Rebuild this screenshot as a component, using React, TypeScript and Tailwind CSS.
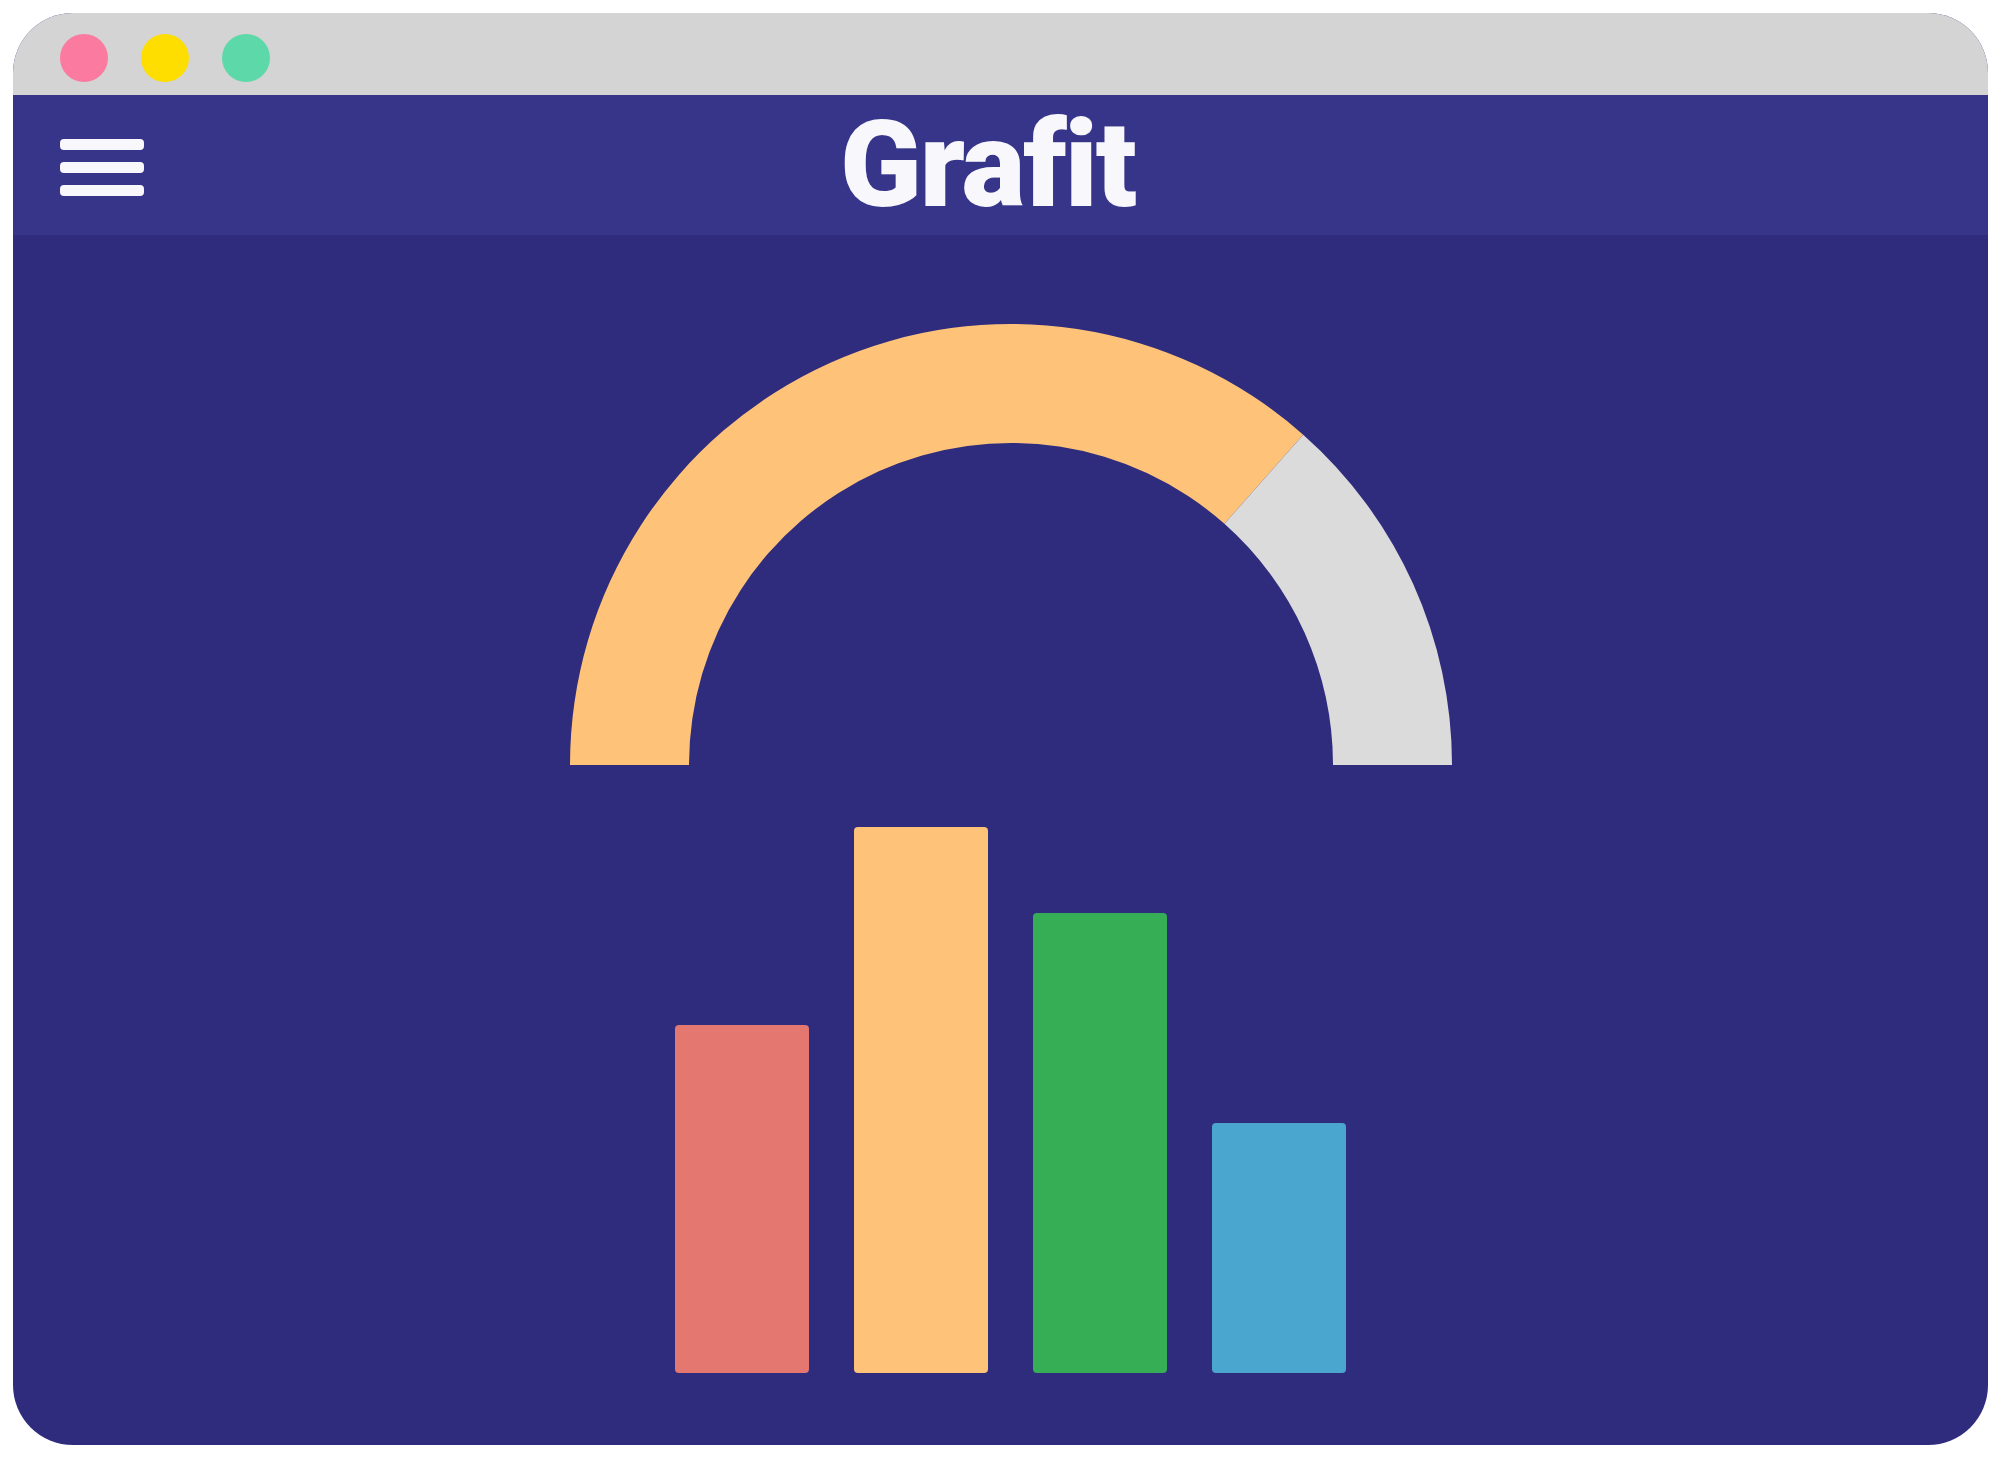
import React from 'react';

const bars = [
  { color: 'bg-[#e57771]', h: 'h-[348px]' },
  { color: 'bg-[#fec378]', h: 'h-[546px]' },
  { color: 'bg-[#36ae55]', h: 'h-[460px]' },
  { color: 'bg-[#4ba6cf]', h: 'h-[250px]' },
];

function Gauge() {
  // semicircle ring, outer r 441, inner r 322, split at ~73%
  return (
    <svg width="882" height="444" viewBox="0 0 882 444" className="block">
      <path
        d="M 0 444 A 441 441 0 0 1 733.2 113.7 L 654.4 202.8 A 322 322 0 0 0 119 444 Z"
        fill="#fec378"
      />
      <path
        d="M 733.2 113.7 A 441 441 0 0 1 882 444 L 763 444 A 322 322 0 0 0 654.4 202.8 Z"
        fill="#dbdbdb"
      />
    </svg>
  );
}

export default function App() {
  return (
    <div className="w-[2001px] h-[1458px] bg-white p-[13px]">
      <div className="w-full h-full rounded-[60px] overflow-hidden flex flex-col bg-[#2f2c7e]">
        {/* Title bar */}
        <div className="h-[82px] bg-[#d4d4d4] flex gap-[33px] pl-[47px] pt-[21px] shrink-0">
          <span className="w-[48px] h-[48px] rounded-full bg-[#fa7aa0]" />
          <span className="w-[48px] h-[48px] rounded-full bg-[#fedd00]" />
          <span className="w-[48px] h-[48px] rounded-full bg-[#5dd8a8]" />
        </div>

        {/* Header */}
        <div className="relative h-[140px] bg-[#37358a] flex items-center justify-center shrink-0 pr-[26px]">
          <div className="absolute left-[47px] top-[44px] flex flex-col gap-[12px]">
            <span className="block w-[84px] h-[11px] rounded-[4px] bg-[#f8f8fc]" />
            <span className="block w-[84px] h-[11px] rounded-[4px] bg-[#f8f8fc]" />
            <span className="block w-[84px] h-[11px] rounded-[4px] bg-[#f8f8fc]" />
          </div>
          <h1
            className="text-[#f8f8fc] text-[120px] leading-none font-black tracking-[-2px]"
            style={{ fontFamily: 'Roboto, "Noto Sans", sans-serif' }}
          >
            Grafit
          </h1>
        </div>

        {/* Body */}
        <div className="flex-1 flex flex-col items-center pl-[20px] pt-[86px]">
          <Gauge />
          <div className="flex items-end gap-[45px] mt-[62px]">
            {bars.map((b, i) => (
              <div key={i} className={`w-[134px] ${b.h} ${b.color} rounded-[4px]`} />
            ))}
          </div>
        </div>
      </div>
    </div>
  );
}
